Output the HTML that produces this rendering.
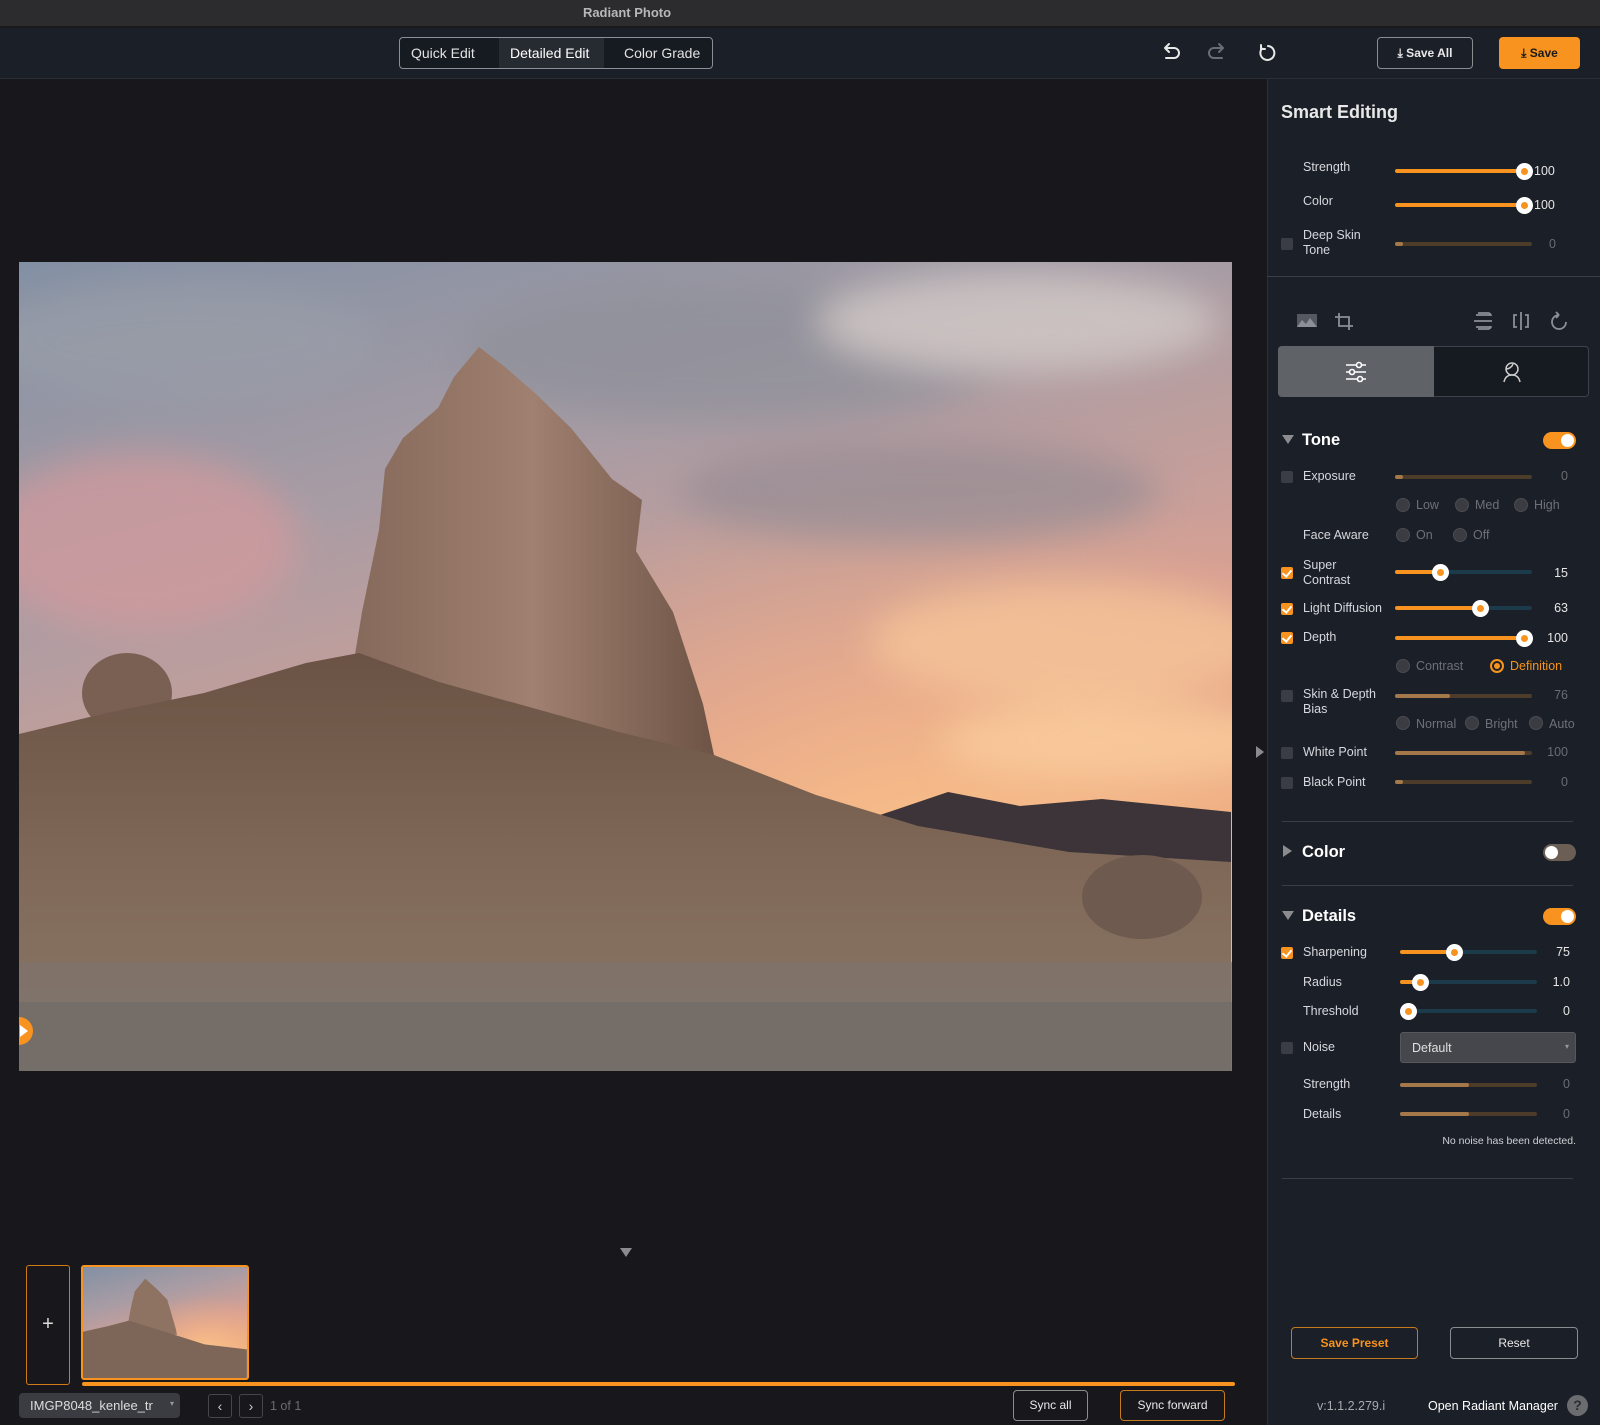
<!DOCTYPE html>
<html><head><meta charset="utf-8"><style>
*{box-sizing:border-box;margin:0;padding:0}
body{width:1600px;height:1425px;background:#18171c;font-family:"Liberation Sans",sans-serif;position:relative;overflow:hidden;color:#d8dadf}
.a{position:absolute}
.lbl{position:absolute;font-size:12.5px;color:#d6d8dd;line-height:15px}
.val{position:absolute;font-size:12.5px;color:#e6e6e6;text-align:right;width:40px}
.dim{color:#6a6c72}
.cb{position:absolute;width:12px;height:12px;border-radius:2px;background:#3b3d44}
.cb.on{background:#f7931e}
.cb.on::after{content:"";position:absolute;left:3px;top:1px;width:4px;height:7px;border:solid #fff;border-width:0 2px 2px 0;transform:rotate(40deg)}
.tr{position:absolute;height:4px;border-radius:2px}
.th{position:absolute;width:17px;height:17px;border-radius:50%;background:#fff;margin-left:-8px;margin-top:-8px}
.th::after{content:"";position:absolute;left:5px;top:5px;width:7px;height:7px;border-radius:50%;background:#f7931e}
.rd{position:absolute;width:14px;height:14px;border-radius:50%;background:#3a3c42;border:1px solid #4a4c52}
.rdl{position:absolute;font-size:12.5px;color:#6e7076}
.sec{position:absolute;font-size:16.5px;font-weight:bold;color:#fff}
.tri{position:absolute;width:0;height:0}
.sep{position:absolute;height:1px;background:#3a3e46}
.tg{position:absolute;width:33px;height:17px;border-radius:9px;background:#f7931e}
.tg::after{content:"";position:absolute;right:2px;top:2px;width:13px;height:13px;border-radius:50%;background:#fff}
.btn{position:absolute;border:1px solid #8a8c90;border-radius:4px;font-size:12px;color:#e8e8e8;text-align:center}
</style></head><body>
<div class="a" style="left:0;top:0;width:1600px;height:27px;background:#2c2c2e;border-bottom:1px solid #1a1a1a"></div>
<div class="a" style="left:0;top:5px;width:1254px;text-align:center;font-size:13px;font-weight:bold;color:#b8b8b8">Radiant Photo</div>
<div class="a" style="left:0;top:28px;width:1600px;height:51px;background:#1b1f27;border-bottom:1px solid #2a2e36"></div>
<div class="a" style="left:399px;top:37px;width:314px;height:32px;border:1px solid #8a8e96;border-radius:4px;background:#161a21"></div>
<div class="a" style="left:499px;top:38px;width:105px;height:30px;background:#262a31"></div>
<div class="a" style="left:411px;top:45px;font-size:14px;color:#e2e2e2">Quick Edit</div>
<div class="a" style="left:510px;top:45px;font-size:14px;color:#fff">Detailed Edit</div>
<div class="a" style="left:624px;top:45px;font-size:14px;color:#e2e2e2">Color Grade</div>
<svg class="a" style="left:1160px;top:42px" width="120" height="22" viewBox="0 0 120 22" fill="none" stroke-width="2" stroke-linecap="round">
<path d="M5 6h9a5 5 0 0 1 0 10H6M5 6l4-4M5 6l4 4" stroke="#e8e8e8"/>
<path d="M63 6h-9a5 5 0 0 0 0 10h8M63 6l-4-4M63 6l-4 4" stroke="#6a6d72"/>
<path d="M108 4a7 7 0 1 1-6 2.5M101 3v4h4" stroke="#e8e8e8"/>
</svg>
<div class="btn" style="left:1377px;top:37px;width:96px;height:32px;line-height:30px;font-weight:bold">⤓ Save All</div>
<div class="a" style="left:1499px;top:37px;width:81px;height:32px;border-radius:4px;background:#f7931e;color:#1a1a1a;font-size:12px;font-weight:bold;text-align:center;line-height:32px">⤓ Save</div>
<div class="a" style="left:1267px;top:79px;width:333px;height:1346px;background:#1b1f27;border-left:1px solid #2a2e36"></div>
<div class="a" style="left:1281px;top:102px;font-size:18px;font-weight:bold;color:#e8e8e8">Smart Editing</div>
<div class="lbl" style="left:1303px;top:160px">Strength</div>
<div class="tr" style="left:1395px;top:169px;width:129px;background:#f7931e"></div><div class="th" style="left:1524px;top:171px"></div>
<div class="val" style="left:1534px;top:164px;text-align:left">100</div>
<div class="lbl" style="left:1303px;top:194px">Color</div>
<div class="tr" style="left:1395px;top:203px;width:129px;background:#f7931e"></div><div class="th" style="left:1524px;top:205px"></div>
<div class="val" style="left:1534px;top:198px;text-align:left">100</div>
<div class="cb" style="left:1281px;top:238px"></div>
<div class="lbl" style="left:1303px;top:228px">Deep Skin<br>Tone</div>
<div class="tr" style="left:1395px;top:242px;width:137px;background:#4e3c2a"></div><div class="tr" style="left:1395px;top:242px;width:8px;background:#a5784a"></div>
<div class="val dim" style="left:1516px;top:237px">0</div>
<div class="sep" style="left:1267px;top:276px;width:333px;background:#3a3e46"></div>
<svg class="a" style="left:1296px;top:310px" width="300" height="22" viewBox="0 0 300 22" fill="none" stroke="#8c8f95" stroke-width="1.8">
<rect x="1" y="4" width="20" height="13" fill="#55585e" stroke="none"/><path d="M1 17l5-7 4 4 4-6 7 9z" fill="#8c8f95" stroke="none"/>
<path d="M43 3v13h14M39 7h14v13"/>
<path d="M180 5h14M178 11h18M180 17h14" /><path d="M182 3h10a3 3 0 0 1 3 3M182 19h10a3 3 0 0 0 3-3"/>
<path d="M225 2v18M221 5h-3v12h3M229 5h3v12h-3"/>
<path d="M263 5a7 7 0 1 0 7 7M263 5l-3-3M263 5l-3 3"/>
</svg>
<div class="a" style="left:1278px;top:346px;width:311px;height:51px;border:1px solid #3e424a;border-radius:4px;background:#161a21"></div>
<div class="a" style="left:1278px;top:346px;width:156px;height:51px;background:#5f6368;border-radius:4px 0 0 4px"></div>
<svg class="a" style="left:1344px;top:360px" width="24" height="24" viewBox="0 0 24 24" fill="none" stroke="#fff" stroke-width="1.6"><path d="M2 5h20M2 12h20M2 19h20"/><circle cx="15" cy="5" r="2.5" fill="#5f6368"/><circle cx="8" cy="12" r="2.5" fill="#5f6368"/><circle cx="16" cy="19" r="2.5" fill="#5f6368"/></svg>
<svg class="a" style="left:1500px;top:360px" width="24" height="24" viewBox="0 0 24 24" fill="none" stroke="#ccc" stroke-width="1.5"><circle cx="12" cy="9" r="6"/><path d="M6 9c3 0 6-2 7-5M4 22c1-5 4-7 8-7s7 2 8 7"/></svg>
<div class="tri" style="left:1282px;top:435px;border-left:6px solid transparent;border-right:6px solid transparent;border-top:9px solid #8a8c90"></div>
<div class="sec" style="left:1302px;top:431px">Tone</div>
<div class="tg" style="left:1543px;top:432px"></div>
<div class="cb" style="left:1281px;top:471px"></div><div class="lbl" style="left:1303px;top:469px">Exposure</div>
<div class="tr" style="left:1395px;top:475px;width:137px;background:#4e3c2a"></div><div class="tr" style="left:1395px;top:475px;width:8px;background:#a5784a"></div>
<div class="val dim" style="left:1528px;top:469px">0</div>
<div class="rd" style="left:1396px;top:498px"></div><div class="rdl" style="left:1416px;top:498px">Low</div>
<div class="rd" style="left:1455px;top:498px"></div><div class="rdl" style="left:1475px;top:498px">Med</div>
<div class="rd" style="left:1514px;top:498px"></div><div class="rdl" style="left:1534px;top:498px">High</div>
<div class="lbl" style="left:1303px;top:528px">Face Aware</div>
<div class="rd" style="left:1396px;top:528px"></div><div class="rdl" style="left:1416px;top:528px">On</div>
<div class="rd" style="left:1453px;top:528px"></div><div class="rdl" style="left:1473px;top:528px">Off</div>
<div class="cb on" style="left:1281px;top:567px"></div><div class="lbl" style="left:1303px;top:558px">Super<br>Contrast</div>
<div class="tr" style="left:1395px;top:570px;width:137px;background:#1b3a4a"></div><div class="tr" style="left:1395px;top:570px;width:44px;background:#f7931e"></div><div class="th" style="left:1440px;top:572px"></div>
<div class="val" style="left:1528px;top:566px">15</div>
<div class="cb on" style="left:1281px;top:603px"></div><div class="lbl" style="left:1303px;top:601px">Light Diffusion</div>
<div class="tr" style="left:1395px;top:606px;width:137px;background:#1b3a4a"></div><div class="tr" style="left:1395px;top:606px;width:84px;background:#f7931e"></div><div class="th" style="left:1480px;top:608px"></div>
<div class="val" style="left:1528px;top:601px">63</div>
<div class="cb on" style="left:1281px;top:632px"></div><div class="lbl" style="left:1303px;top:630px">Depth</div>
<div class="tr" style="left:1395px;top:636px;width:128px;background:#f7931e"></div><div class="th" style="left:1524px;top:638px"></div>
<div class="val" style="left:1528px;top:631px">100</div>
<div class="rd" style="left:1396px;top:659px"></div><div class="rdl" style="left:1416px;top:659px">Contrast</div>
<div class="rd" style="left:1490px;top:659px;background:#1b1f27;border:2px solid #f7931e"></div><div class="a" style="left:1494px;top:663px;width:6px;height:6px;border-radius:50%;background:#f7931e"></div><div class="rdl" style="left:1510px;top:659px;color:#f7931e">Definition</div>
<div class="cb" style="left:1281px;top:690px"></div><div class="lbl" style="left:1303px;top:687px">Skin &amp; Depth<br>Bias</div>
<div class="tr" style="left:1395px;top:694px;width:137px;background:#4e3c2a"></div><div class="tr" style="left:1395px;top:694px;width:55px;background:#a5784a"></div>
<div class="val dim" style="left:1528px;top:688px">76</div>
<div class="rd" style="left:1396px;top:716px"></div><div class="rdl" style="left:1416px;top:717px">Normal</div>
<div class="rd" style="left:1465px;top:716px"></div><div class="rdl" style="left:1485px;top:717px">Bright</div>
<div class="rd" style="left:1529px;top:716px"></div><div class="rdl" style="left:1549px;top:717px">Auto</div>
<div class="cb" style="left:1281px;top:747px"></div><div class="lbl" style="left:1303px;top:745px">White Point</div>
<div class="tr" style="left:1395px;top:751px;width:137px;background:#4e3c2a"></div><div class="tr" style="left:1395px;top:751px;width:130px;background:#a5784a"></div>
<div class="val dim" style="left:1528px;top:745px">100</div>
<div class="cb" style="left:1281px;top:777px"></div><div class="lbl" style="left:1303px;top:775px">Black Point</div>
<div class="tr" style="left:1395px;top:780px;width:137px;background:#4e3c2a"></div><div class="tr" style="left:1395px;top:780px;width:8px;background:#a5784a"></div>
<div class="val dim" style="left:1528px;top:775px">0</div>
<div class="a" style="left:1256px;top:746px;border-top:6px solid transparent;border-bottom:6px solid transparent;border-left:8px solid #8a8c90"></div>
<div class="sep" style="left:1282px;top:821px;width:291px"></div>
<div class="tri" style="left:1283px;top:845px;border-top:6px solid transparent;border-bottom:6px solid transparent;border-left:9px solid #8a8c90"></div>
<div class="sec" style="left:1302px;top:843px">Color</div>
<div class="a" style="left:1543px;top:844px;width:33px;height:17px;border-radius:9px;background:#6b5e55"></div><div class="a" style="left:1545px;top:846px;width:13px;height:13px;border-radius:50%;background:#fff"></div>
<div class="sep" style="left:1282px;top:885px;width:291px"></div>
<div class="tri" style="left:1282px;top:911px;border-left:6px solid transparent;border-right:6px solid transparent;border-top:9px solid #8a8c90"></div>
<div class="sec" style="left:1302px;top:907px">Details</div>
<div class="tg" style="left:1543px;top:908px"></div>
<div class="cb on" style="left:1281px;top:947px"></div><div class="lbl" style="left:1303px;top:945px">Sharpening</div>
<div class="tr" style="left:1400px;top:950px;width:137px;background:#1b3a4a"></div><div class="tr" style="left:1400px;top:950px;width:53px;background:#f7931e"></div><div class="th" style="left:1454px;top:952px"></div>
<div class="val" style="left:1530px;top:945px">75</div>
<div class="lbl" style="left:1303px;top:975px">Radius</div>
<div class="tr" style="left:1400px;top:980px;width:137px;background:#1b3a4a"></div><div class="tr" style="left:1400px;top:980px;width:20px;background:#f7931e"></div><div class="th" style="left:1420px;top:982px"></div>
<div class="val" style="left:1530px;top:975px">1.0</div>
<div class="lbl" style="left:1303px;top:1004px">Threshold</div>
<div class="tr" style="left:1400px;top:1009px;width:137px;background:#1b3a4a"></div><div class="th" style="left:1408px;top:1011px"></div>
<div class="val" style="left:1530px;top:1004px">0</div>
<div class="cb" style="left:1281px;top:1042px"></div><div class="lbl" style="left:1303px;top:1040px">Noise</div>
<div class="a" style="left:1400px;top:1032px;width:176px;height:31px;border-radius:3px;background:#45474d;border:1px solid #55575d;font-size:12.5px;color:#e0e0e0;padding:8px 11px">Default<span style="position:absolute;right:6px;top:9px;font-size:8px;color:#999">▾</span></div>
<div class="lbl" style="left:1303px;top:1077px">Strength</div>
<div class="tr" style="left:1400px;top:1083px;width:137px;background:#4e3c2a"></div><div class="tr" style="left:1400px;top:1083px;width:69px;background:#a5784a"></div>
<div class="val dim" style="left:1530px;top:1077px">0</div>
<div class="lbl" style="left:1303px;top:1107px">Details</div>
<div class="tr" style="left:1400px;top:1112px;width:137px;background:#4e3c2a"></div><div class="tr" style="left:1400px;top:1112px;width:69px;background:#a5784a"></div>
<div class="val dim" style="left:1530px;top:1107px">0</div>
<div class="a" style="left:1376px;top:1135px;width:200px;text-align:right;font-size:10.5px;color:#cfd1d5">No noise has been detected.</div>
<div class="sep" style="left:1282px;top:1178px;width:291px"></div>
<div class="btn" style="left:1291px;top:1327px;width:127px;height:32px;line-height:30px;border-color:#c67a1f;color:#f7931e;font-weight:bold">Save Preset</div>
<div class="btn" style="left:1450px;top:1327px;width:128px;height:32px;line-height:30px">Reset</div>
<div class="a" style="left:1317px;top:1399px;font-size:12.5px;color:#a8aaae">v:1.1.2.279.i</div>
<div class="a" style="left:1428px;top:1399px;font-size:12.5px;color:#fff">Open Radiant Manager</div>
<div class="a" style="left:1567px;top:1395px;width:21px;height:21px;border-radius:50%;background:#6a6c70;color:#2b2d31;font-weight:bold;font-size:14px;text-align:center;line-height:21px">?</div>
<svg class="a" style="left:19px;top:262px" width="1213" height="809" viewBox="0 0 1213 809">
<defs>
<linearGradient id="sky" x1="0" y1="0" x2="0.4" y2="1"><stop offset="0" stop-color="#8290a4"/><stop offset="0.35" stop-color="#a89ca4"/><stop offset="0.7" stop-color="#d8a094"/><stop offset="1" stop-color="#f0b07e"/></linearGradient>
<radialGradient id="glow" cx="0.75" cy="0.75" r="0.5"><stop offset="0" stop-color="#fbc28a"/><stop offset="1" stop-color="#f0a880" stop-opacity="0"/></radialGradient>
<linearGradient id="hill" x1="0" y1="0" x2="0" y2="1"><stop offset="0" stop-color="#6a5244"/><stop offset="0.5" stop-color="#806858"/><stop offset="1" stop-color="#8a7868"/></linearGradient>
<linearGradient id="rock" x1="0" y1="0" x2="1" y2="0"><stop offset="0" stop-color="#85695a"/><stop offset="0.5" stop-color="#a08070"/><stop offset="1" stop-color="#6e5446"/></linearGradient>
<filter id="bl"><feGaussianBlur stdDeviation="18"/></filter>
</defs>
<rect width="1213" height="809" fill="url(#sky)"/>
<rect width="1213" height="809" fill="url(#glow)"/>
<g filter="url(#bl)" opacity="0.7">
<ellipse cx="160" cy="80" rx="200" ry="60" fill="#9a9ea8"/>
<ellipse cx="120" cy="280" rx="160" ry="90" fill="#d49a9c"/>
<ellipse cx="720" cy="90" rx="280" ry="70" fill="#8e909a"/>
<ellipse cx="1000" cy="60" rx="200" ry="50" fill="#d8d0cc"/>
<ellipse cx="900" cy="230" rx="240" ry="50" fill="#948c94"/>
<ellipse cx="1050" cy="380" rx="200" ry="60" fill="#f8c89a"/>
<ellipse cx="1100" cy="480" rx="180" ry="40" fill="#fcd0a0"/>
</g>
<path d="M858 554L929 530L1001 544L1083 537L1212 550V640H858Z" fill="#3c3438"/>
<path d="M333 411L343 350L360 268L366 207L384 176L419 146L435 115L460 85L486 105L516 131L552 166L593 217L623 238L617 289L654 350L684 442L695 493L640 520L333 520Z" fill="url(#rock)"/>
<ellipse cx="108" cy="431" rx="45" ry="40" fill="#7a6052"/>
<path d="M0 472L83 452L185 431L287 401L340 391L420 420L600 470L695 493L797 533L899 564L1050 590L1212 600V809H0Z" fill="url(#hill)"/>
<ellipse cx="1123" cy="635" rx="60" ry="42" fill="#6e5a4e"/>
<rect x="0" y="700" width="1213" height="109" fill="#7e746c" opacity="0.7"/>
<rect x="0" y="740" width="1213" height="69" fill="#6e6a68" opacity="0.6"/>
</svg>
<div class="a" style="left:19px;top:1017px;width:14px;height:28px;border-radius:0 14px 14px 0;background:#f7931e"></div>
<div class="a" style="left:20px;top:1025px;border-top:6px solid transparent;border-bottom:6px solid transparent;border-left:8px solid #fff"></div>
<div class="a" style="left:620px;top:1248px;border-left:6px solid transparent;border-right:6px solid transparent;border-top:9px solid #8a8c90"></div>
<div class="a" style="left:26px;top:1265px;width:44px;height:120px;border:1px solid #d07a18;border-radius:3px;color:#ddd;font-size:20px;text-align:center;line-height:116px">+</div>
<svg class="a" style="left:81px;top:1265px;border:2px solid #f7931e;border-radius:3px" width="168" height="115" viewBox="0 0 1213 809" preserveAspectRatio="none">
<rect width="1213" height="809" fill="url(#sky)"/><rect width="1213" height="809" fill="url(#glow)"/>
<path d="M333 411L360 268L384 176L460 85L552 166L623 238L684 442L695 493L333 520Z" fill="#8e7262"/>
<path d="M0 472L185 431L340 391L600 470L899 564L1212 600V809H0Z" fill="#7d6658"/>
</svg>
<div class="a" style="left:82px;top:1382px;width:1153px;height:4px;background:#f7931e;border-radius:2px"></div>
<div class="a" style="left:19px;top:1393px;width:161px;height:25px;border-radius:4px;background:#3a3c42;font-size:13px;color:#ddd;padding:5px 11px;overflow:hidden;white-space:nowrap">IMGP8048_kenlee_tr<span style="position:absolute;right:6px;top:6px;font-size:8px;color:#999">▾</span></div>
<div class="a" style="left:208px;top:1394px;width:24px;height:24px;border:1px solid #44464c;border-radius:3px;color:#ccc;text-align:center;line-height:22px;font-size:14px">‹</div>
<div class="a" style="left:239px;top:1394px;width:24px;height:24px;border:1px solid #44464c;border-radius:3px;color:#ccc;text-align:center;line-height:22px;font-size:14px">›</div>
<div class="a" style="left:270px;top:1399px;font-size:12.5px;color:#6a6c72">1 of 1</div>
<div class="btn" style="left:1013px;top:1390px;width:75px;height:31px;line-height:29px">Sync all</div>
<div class="btn" style="left:1120px;top:1390px;width:105px;height:31px;line-height:29px;border-color:#c67a1f">Sync forward</div>
</body></html>
